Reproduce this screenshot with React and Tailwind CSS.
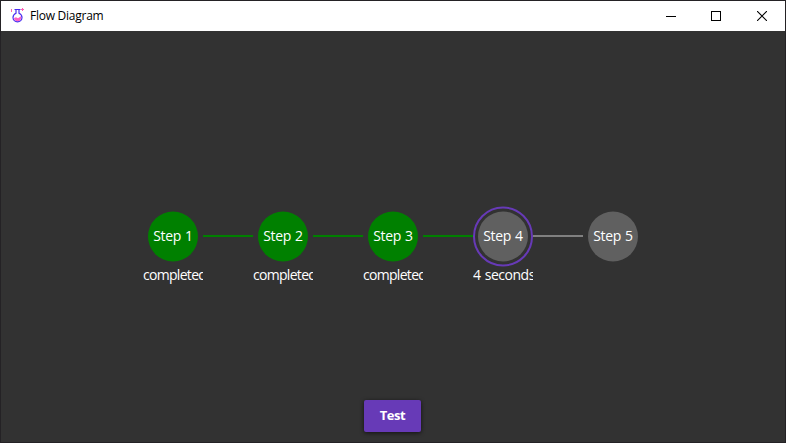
import { Fragment } from "react";

const steps = [
  { name: "Step 1", status: "completed", done: true },
  { name: "Step 2", status: "completed", done: true },
  { name: "Step 3", status: "completed", done: true },
  { name: "Step 4", status: "4 seconds", active: true },
  { name: "Step 5", status: "" },
];

function FlaskIcon() {
  return (
    <svg className="h-4 w-4" viewBox="0 0 16 16" fill="none">
      <path d="M5 10l2-.8 2 1 3-2c.5 3-1 5-3.400 5S5 12 5 10z" fill="#ff5fc4" />
      <path d="M5.500 1.500h6M7 2v3.300C5.300 6 4 7.500 4 9.500a4.500 4.300 0 0 0 9 0C13 7.500 11.700 6 10 5.300V2" stroke="#4a2df0" strokeWidth="1.200" />
      <path d="M12 1.500h3M13.500 0v3M2.500 1v3" stroke="#ff5fb0" strokeWidth="1" />
    </svg>
  );
}

function Step({ step }) {
  return (
    <div className="flex h-[80px] w-[60px] shrink-0 flex-col">
      <div className="grid h-[61px] w-[60px] shrink-0 place-items-center">
        <svg className="col-start-1 row-start-1 h-[61px] w-[60px]" viewBox="0 0 60 61" fill="none">
          {step.active && <circle cx="30" cy="30.5" r="29" stroke="#673ab7" strokeWidth="2" />}
          <circle cx="30" cy="30.5" r="25" fill={step.done ? "#008000" : "#606060"} />
        </svg>
        <span className="col-start-1 row-start-1 pb-px text-[14px] leading-5 tracking-[-0.4px] [word-spacing:1px] whitespace-nowrap text-white">
          {step.name}
        </span>
      </div>
      <div
        className={`h-[19px] overflow-hidden text-[14px] leading-[15px] whitespace-nowrap text-white ${
          step.active ? "tracking-[-0.5px] [word-spacing:1.2px]" : "tracking-[-0.7px]"
        }`}
      >
        {step.status}
      </div>
    </div>
  );
}

export default function App() {
  return (
    <div className="flex h-[443px] w-[786px] flex-col overflow-hidden border border-[#242225] bg-[#323232] font-['Open_Sans','Noto_Sans',sans-serif]">
      <header className="flex h-[30px] shrink-0 items-center bg-white pl-2 text-black">
        <FlaskIcon />
        <span className="ml-[5px] text-[12px] leading-4 tracking-[-0.25px]">Flow Diagram</span>
        <div className="ml-auto flex">
          <div className="flex h-[30px] w-[45px] items-center justify-start pl-[18px]">
            <svg className="h-[10px] w-[10px]" viewBox="0 0 10 10" shapeRendering="crispEdges">
              <path d="M0 5h10v1H0z" fill="black" />
            </svg>
          </div>
          <div className="flex h-[30px] w-[46px] items-center justify-center">
            <svg className="h-[10px] w-[10px]" viewBox="0 0 10 10" fill="none" shapeRendering="crispEdges">
              <path d="M.5.5h9v9h-9z" stroke="black" />
            </svg>
          </div>
          <div className="flex h-[30px] w-[46px] items-center justify-center">
            <svg className="h-[10px] w-[10px]" viewBox="0 0 10 10" fill="none">
              <path d="M0 0l10 10M10 0L0 10" stroke="black" strokeWidth="1.1" />
            </svg>
          </div>
        </div>
      </header>
      <main className="flex min-h-0 flex-1 flex-col items-center pt-[175px]">
        <div className="flex">
          {steps.map((step, i) => (
            <Fragment key={step.name}>
              {i > 0 && (
                <div
                  className={`mt-[29px] h-[2px] w-[50px] ${
                    steps[i - 1].done ? "bg-[#008000]" : "bg-[#808080]"
                  }`}
                />
              )}
              <Step step={step} />
            </Fragment>
          ))}
        </div>
        <button className="mt-auto mr-px mb-[10px] h-8 w-[57px] rounded-[2px] bg-[#673ab7] pb-[2px] text-[13px] leading-5 font-bold tracking-[-0.4px] text-white shadow-[0_1px_4px_rgba(0,0,0,0.65)]">
          Test
        </button>
      </main>
    </div>
  );
}
